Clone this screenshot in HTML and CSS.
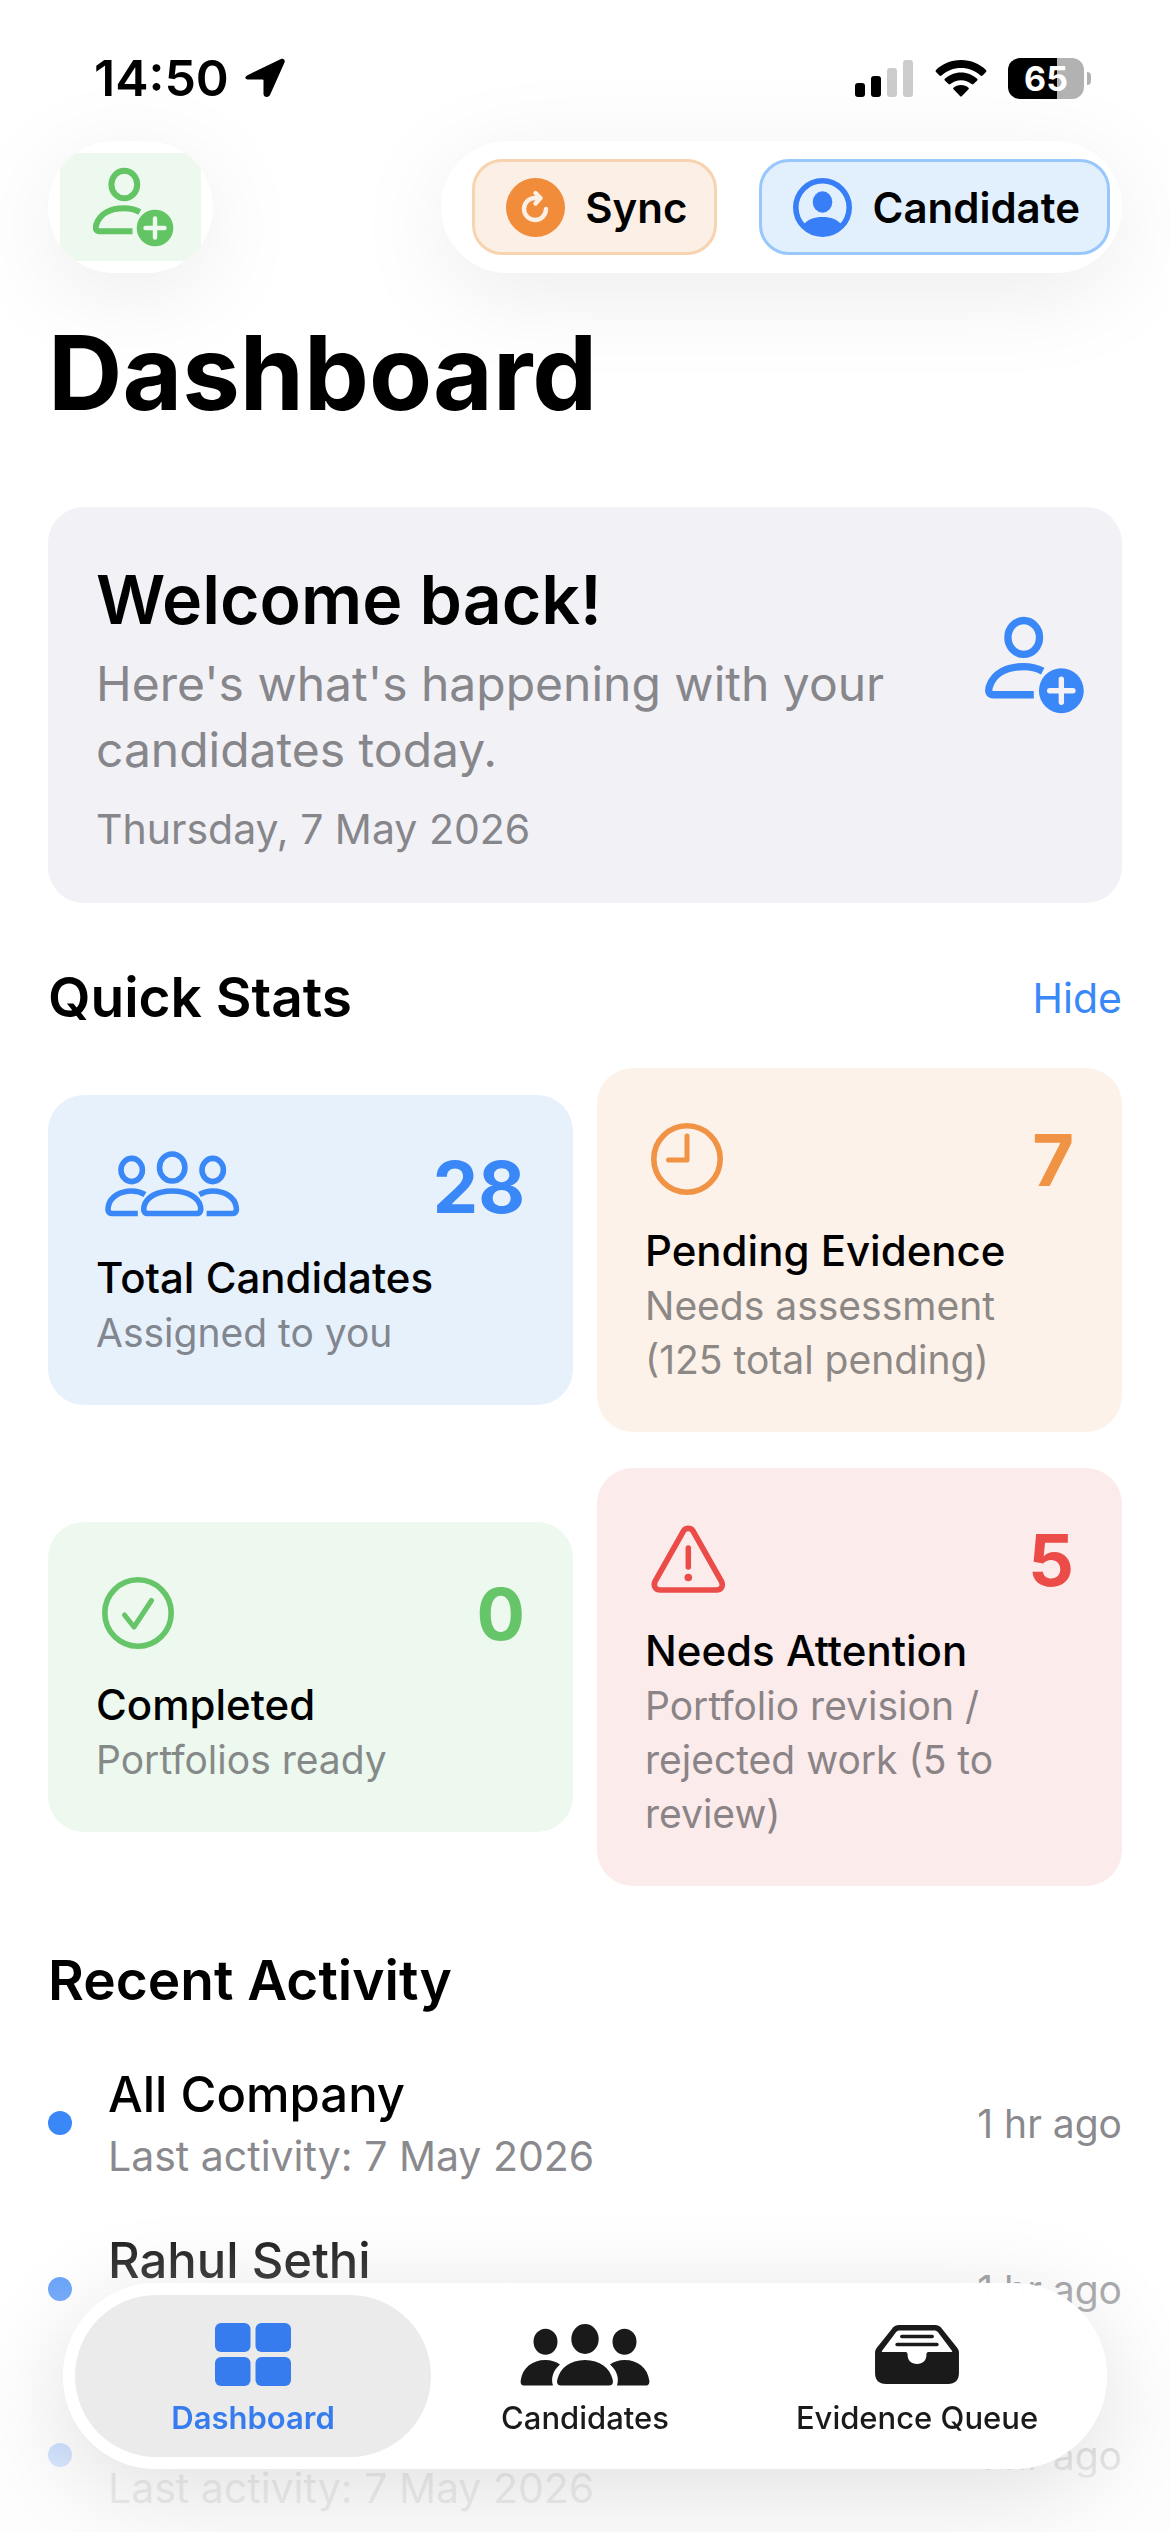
FILE: index.html
```html
<!DOCTYPE html>
<html lang="en">
<head>
    <meta charset="UTF-8">
    <meta name="viewport" content="width=device-width, initial-scale=1.0">
    <title>Dashboard</title>
    <link rel="stylesheet" href="styles.css">
</head>
<body>
    <!-- shared icons -->
    <svg class="sprite" aria-hidden="true">
        <symbol id="person-plus" viewBox="3 5 81 80">
            <g fill="none" stroke="currentColor" stroke-width="6">
                <ellipse cx="34.3" cy="22.5" rx="12.9" ry="13.8"/>
                <path d="M42.5 69.3H10C5.5 69.3 5 66 6.5 62C10 52 20 46.3 34.3 46.3C41 46.3 45 47.5 49.8 50"/>
            </g>
            <circle cx="65" cy="66" r="18.3" fill="currentColor"/>
            <path class="icon-cut" d="M65 56.5V75.5M55.5 66H74.5" stroke-width="4.4" stroke-linecap="round"/>
        </symbol>
    </svg>

    <div class="screen">
        <header class="status-bar">
            <div class="status-left">
                <span class="clock">14:50</span>
                <svg width="40" height="40" viewBox="0 0 40 40"><path d="M3 17L36 1C38.5 0 40.5 2 39.5 4.5L25 37C23.5 40 18.5 39.5 18.5 36V22.5Q18.5 21.5 17.5 21.5H4C-.5 21.5 -.8 18.8 3 17Z"/></svg>
            </div>
            <div class="status-right">
                <svg width="59" height="38" viewBox="0 0 59 38">
                    <rect x="0" y="24" width="10" height="14" rx="3"/>
                    <rect x="16" y="17" width="10" height="21" rx="3"/>
                    <rect x="32" y="9" width="10" height="29" rx="3" fill="#ccc"/>
                    <rect x="48" y="1" width="10" height="37" rx="3" fill="#ccc"/>
                </svg>
                <svg width="52" height="38" viewBox="0 0 52 38">
                    <path d="M26 1C36 1 45 5 51 11Q52 12 51 13L47.5 16.5Q46.5 17.3 45.5 16.5C40 11.5 33.5 9 26 9S12 11.5 6.5 16.5Q5.5 17.3 4.5 16.5L1 13Q0 12 1 11C7 5 16 1 26 1Z"/>
                    <path d="M26 13.5C32.5 13.5 38 16 42.2 19.8Q43 20.7 42.2 21.5L38.5 25Q37.5 25.8 36.6 25C33.5 22.5 30 21.2 26 21.2S18.5 22.5 15.4 25Q14.5 25.8 13.5 25L9.8 21.5Q9 20.7 9.8 19.8C14 16 19.5 13.5 26 13.5Z"/>
                    <path d="M26 26C29 26 31.5 27 33.5 28.7Q34.3 29.5 33.5 30.3L27 37Q26 38 25 37L18.5 30.3Q17.7 29.5 18.5 28.7C20.5 27 23 26 26 26Z"/>
                </svg>
                <div class="battery"><span class="battery-level">65</span></div>
            </div>
        </header>

        <nav class="toolbar">
            <div class="pill pill-add">
                <button class="add-button" type="button" aria-label="Add candidate">
                    <svg width="81" height="80"><use href="#person-plus"/></svg>
                </button>
            </div>
            <div class="pill pill-actions">
                <button class="action sync" type="button">
                    <svg width="59" height="59" viewBox="0 0 59 59">
                        <circle cx="29.5" cy="29.5" r="29.5" fill="#f08c3a"/>
                        <path d="M40 31A11 11 0 1 1 29.5 20H34M29.5 15L34.5 20L29.5 25.5" fill="none" stroke="#fcf0e6" stroke-width="4.4" stroke-linecap="round" stroke-linejoin="round"/>
                    </svg>
                    Sync
                </button>
                <button class="action candidate" type="button">
                    <svg width="59" height="59" viewBox="0 0 59 59">
                        <circle cx="29.5" cy="29.5" r="26.7" fill="none" stroke="#387ff7" stroke-width="5.6"/>
                        <ellipse cx="29.5" cy="24" rx="9.8" ry="10.7" fill="#387ff7"/>
                        <path d="M11 46C15 41.5 21 39 29.5 39S44 41.5 48 46C43 53 37 56.5 29.5 56.5S16 53 11 46Z" fill="#387ff7"/>
                    </svg>
                    Candidate
                </button>
            </div>
        </nav>

        <main>
            <h1>Dashboard</h1>

            <section class="welcome">
                <div>
                    <h2>Welcome back!</h2>
                    <p class="welcome-text">Here's what's happening with your candidates today.</p>
                    <p class="welcome-date">Thursday, 7 May 2026</p>
                </div>
                <svg class="welcome-icon" width="100" height="98"><use href="#person-plus"/></svg>
            </section>

            <section>
                <div class="section-head">
                    <h3>Quick Stats</h3>
                    <button class="hide-button" type="button">Hide</button>
                </div>
                <div class="stats">
                    <article class="stat blue">
                        <div class="stat-top">
                            <svg width="152" height="80" viewBox="0 0 152 80" fill="none" stroke="currentColor" stroke-width="5.6">
                                <ellipse cx="76.2" cy="21.5" rx="12.7" ry="13.5"/>
                                <ellipse cx="35.7" cy="24" rx="10.7" ry="11.6"/>
                                <ellipse cx="116.7" cy="24" rx="10.7" ry="11.6"/>
                                <path d="M52 67.5C47.8 67.5 47.3 64 48 60.5C50 51 61 45 76.2 45C91.5 45 102.5 51 104.5 60.5C105.2 64 104.7 67.5 100.5 67.5Z"/>
                                <path d="M41.8 67.5H16C12 67.5 11.6 64 12.3 60.5C14 51 24 45 35.7 45C40.5 45 45 46.2 49 48.5"/>
                                <path d="M110.6 67.5H136.4C140.4 67.5 140.8 64 140.1 60.5C138.4 51 128.4 45 116.7 45C111.9 45 107.4 46.2 103.4 48.5"/>
                            </svg>
                            <strong>28</strong>
                        </div>
                        <h4>Total Candidates</h4>
                        <p>Assigned to you</p>
                    </article>
                    <article class="stat orange">
                        <div class="stat-top">
                            <svg width="84" height="80" viewBox="0 0 84 80" fill="none" stroke="currentColor" stroke-width="5.6" stroke-linecap="round" stroke-linejoin="round">
                                <circle cx="42" cy="40" r="33.2"/>
                                <path d="M42 17V41H23.5" stroke-width="5"/>
                            </svg>
                            <strong>7</strong>
                        </div>
                        <h4>Pending Evidence</h4>
                        <p>Needs assessment (125 total pending)</p>
                    </article>
                    <article class="stat green">
                        <div class="stat-top">
                            <svg width="84" height="80" viewBox="0 0 84 80" fill="none" stroke="currentColor" stroke-width="5.6" stroke-linecap="round" stroke-linejoin="round">
                                <circle cx="42" cy="40" r="33.2"/>
                                <path d="M28.5 42L38 54L55.5 27.5" stroke-width="5"/>
                            </svg>
                            <strong>0</strong>
                        </div>
                        <h4>Completed</h4>
                        <p>Portfolios ready</p>
                    </article>
                    <article class="stat red">
                        <div class="stat-top">
                            <svg width="86" height="80" viewBox="0 0 86 80" fill="none" stroke="currentColor" stroke-width="5.6" stroke-linecap="round" stroke-linejoin="round">
                                <path d="M38.5 12C40.5 8.5 46 8.5 48 12L76.5 62.5C78.5 67 76.5 71 71.5 71H15.5C10.5 71 8 67 10 62.5Z"/>
                                <path d="M43.3 29V48" stroke-width="5.5"/>
                                <circle cx="43.3" cy="58.5" r="3.8" fill="currentColor" stroke="none"/>
                            </svg>
                            <strong>5</strong>
                        </div>
                        <h4>Needs Attention</h4>
                        <p>Portfolio revision / rejected work (5 to review)</p>
                    </article>
                </div>
            </section>

            <section>
                <div class="section-head">
                    <h3>Recent Activity</h3>
                </div>
                <ul class="activity">
                    <li>
                        <span class="dot"></span>
                        <div class="activity-text">
                            <p class="name">All Company</p>
                            <p class="last">Last activity: 7 May 2026</p>
                        </div>
                        <time>1 hr ago</time>
                    </li>
                    <li>
                        <span class="dot"></span>
                        <div class="activity-text">
                            <p class="name">Rahul Sethi</p>
                            <p class="last">Last activity: 7 May 2026</p>
                        </div>
                        <time>1 hr ago</time>
                    </li>
                    <li>
                        <span class="dot"></span>
                        <div class="activity-text">
                            <p class="name">&nbsp;</p>
                            <p class="last">Last activity: 7 May 2026</p>
                        </div>
                        <time>1 hr ago</time>
                    </li>
                </ul>
            </section>
        </main>

        <div class="bottom-fade"></div>
        <nav class="tab-bar">
            <a class="tab active" href="#dashboard">
                <svg width="78" height="66" viewBox="0 0 78 66">
                    <rect x="1" y="2" width="35.5" height="29" rx="6"/>
                    <rect x="41.5" y="2" width="35.5" height="29" rx="6"/>
                    <rect x="1" y="36" width="35.5" height="29" rx="6"/>
                    <rect x="41.5" y="36" width="35.5" height="29" rx="6"/>
                </svg>
                Dashboard
            </a>
            <a class="tab" href="#candidates">
                <svg width="130" height="66" viewBox="0 0 130 66">
                    <ellipse cx="65" cy="18" rx="13.7" ry="15"/>
                    <ellipse cx="25.5" cy="20.8" rx="12" ry="13"/>
                    <ellipse cx="104.5" cy="20.8" rx="12" ry="13"/>
                    <path d="M41 64.5C37 64.5 36.5 61 37.5 58C40 47.5 50 39 65 39S90 47.5 92.5 58C93.5 61 93 64.5 89 64.5Z"/>
                    <path d="M4 64.5C1 64.5 .3 62 .8 59C2.5 47 12 39 25.5 39C31 39 36 40.5 40 43.5C33.5 49 30.5 57 33 64.5Z"/>
                    <path d="M126 64.5C129 64.5 129.7 62 129.2 59C127.5 47 118 39 104.5 39C99 39 94 40.5 90 43.5C96.5 49 99.5 57 97 64.5Z"/>
                </svg>
                Candidates
            </a>
            <a class="tab" href="#evidence">
                <svg width="86" height="66" viewBox="0 0 82 66" preserveAspectRatio="none">
                    <path fill-rule="evenodd" d="M24 4H58C61 4 63.5 5.5 65 8L79.5 27C80.5 28.5 81 30 81 32V52C81 59 77.5 63 70.5 63H11.5C4.5 63 1 59 1 52V32C1 30 1.5 28.5 2.5 27L17 8C18.5 5.5 21 4 24 4ZM25 9.5C23 9.5 21.8 10 20.8 11.5L7.5 30Q7 31 8 31H30C31.5 31 32 32 32 33.5C32 39.5 35.5 43 41 43S50 39.5 50 33.5C50 32 50.5 31 52 31H74Q75 31 74.5 30L61.2 11.5C60.2 10 59 9.5 57 9.5Z"/>
                    <path d="M26.5 15.5H55.5M22 23.5H60" stroke="currentColor" stroke-width="3.4" stroke-linecap="round"/>
                </svg>
                Evidence Queue
            </a>
        </nav>
    </div>
</body>
</html>
```
FILE: styles.css
```css
* {
    box-sizing: border-box;
    margin: 0;
    padding: 0;
}
body {
    font-family: Inter, "Liberation Sans", sans-serif;
    background-color: #fff;
    color: #000;
}
button {
    font-family: inherit;
    border: none;
    background: none;
    cursor: pointer;
}
svg {
    display: block;
    flex: none;
}
.sprite {
    display: none;
}
.icon-cut {
    stroke: var(--cut);
}
.screen {
    height: 100vh;
    overflow: hidden;
    padding: 0 48px;
}

/* status bar */
.status-bar {
    display: flex;
    justify-content: space-between;
    align-items: center;
    height: 141px;
    padding: 15px 30px 0 46px;
}
.status-left,
.status-right {
    display: flex;
    align-items: center;
}
.status-left {
    gap: 16px;
}
.status-right {
    gap: 21px;
}
.clock {
    font-size: 50px;
    font-weight: 600;
}
.battery {
    position: relative;
    width: 76px;
    height: 41px;
    margin-right: 8px;
    border-radius: 12px;
    background: linear-gradient(to right, #000 65%, #b2b2b2 65%);
    text-align: center;
}
.battery::after {
    content: "";
    position: absolute;
    right: -7px;
    top: 14px;
    width: 4px;
    height: 13px;
    border-radius: 0 4px 4px 0;
    background-color: #b2b2b2;
}
.battery-level {
    color: #fff;
    font-size: 34px;
    line-height: 41px;
    font-weight: 700;
}

/* toolbar */
.toolbar {
    display: flex;
    justify-content: space-between;
}
.pill {
    display: flex;
    align-items: center;
    height: 132px;
    border-radius: 66px;
    background-color: #fff;
    box-shadow: 0 20px 100px rgba(0, 0, 0, 0.08);
    overflow: hidden;
}
.pill-add {
    padding: 12px;
}
.add-button {
    --cut: #edf8ef;
    display: flex;
    align-items: center;
    justify-content: center;
    width: 141px;
    height: 108px;
    padding-left: 6px;
    background-color: #edf8ef;
    color: #62c462;
}
.pill-actions {
    gap: 42px;
    padding: 0 12px 0 31px;
}
.action {
    display: flex;
    align-items: center;
    gap: 20px;
    height: 96px;
    padding: 0 27px 0 31px;
    border-radius: 30px;
    font-size: 42px;
    font-weight: 600;
    color: #000;
}
.sync {
    border: 3px solid #f8d3af;
    background-color: #fcf0e6;
}
.candidate {
    border: 3px solid #98c7fb;
    background-color: #e2f0fe;
}

/* headings */
h1 {
    margin: 38px 0 72px;
    font-size: 103px;
    line-height: 124px;
    font-weight: 700;
}
.section-head {
    display: flex;
    justify-content: space-between;
    align-items: center;
    margin: 60px 0 36px;
}
h3 {
    font-size: 55px;
    line-height: 69px;
    font-weight: 600;
}
.hide-button {
    font-size: 41px;
    color: #3a87f8;
}

/* welcome card */
.welcome {
    --cut: #f1f1f6;
    display: flex;
    justify-content: space-between;
    align-items: center;
    padding: 48px 37px 48px 48px;
    border-radius: 36px;
    background-color: #f1f1f6;
}
.welcome h2 {
    font-size: 68px;
    line-height: 88px;
    font-weight: 600;
}
.welcome-text {
    margin-top: 8px;
    font-size: 48px;
    line-height: 66px;
    color: #86868b;
}
.welcome-date {
    margin-top: 20px;
    font-size: 41px;
    line-height: 52px;
    color: #86868b;
}
.welcome-icon {
    margin-bottom: 80px;
    color: #3a87f8;
}

/* stat cards */
.stats {
    display: grid;
    grid-template-columns: 1fr 1fr;
    align-items: center;
    gap: 36px 24px;
}
.stat {
    padding: 48px 48px 45px;
    border-radius: 36px;
}
.stat-top {
    display: flex;
    justify-content: space-between;
    align-items: center;
    height: 86px;
}
.stat strong {
    font-size: 72px;
    font-weight: 700;
}
.stat h4 {
    margin-top: 24px;
    font-size: 42px;
    line-height: 50px;
    font-weight: 500;
}
.stat p {
    margin-top: 3px;
    font-size: 39px;
    line-height: 54px;
}
.blue {
    background-color: #e7f1fc;
}
.blue .stat-top {
    color: #3a87f8;
}
.blue p {
    color: #82868e;
}
.orange {
    background-color: #fdf2e9;
}
.orange .stat-top {
    color: #f09344;
}
.orange p {
    color: #8c8886;
}
.green {
    background-color: #edf8ef;
}
.green .stat-top {
    color: #66c568;
}
.green p {
    color: #858a88;
}
.red {
    background-color: #fbebeb;
}
.red .stat-top {
    color: #eb4c48;
}
.red p {
    color: #8b8487;
}

/* recent activity */
.activity {
    display: flex;
    flex-direction: column;
    gap: 50px;
    padding-top: 14px;
    list-style: none;
}
.activity li {
    display: flex;
    align-items: center;
}
.dot {
    width: 24px;
    height: 24px;
    margin-right: 36px;
    border-radius: 50%;
    background-color: #3a87f8;
}
.activity-text {
    flex: 1;
}
.name {
    font-size: 49px;
    line-height: 60px;
    font-weight: 500;
}
.last {
    margin-top: 6px;
    font-size: 41px;
    line-height: 50px;
    color: #8a8a8e;
}
.activity time {
    font-size: 39px;
    color: #8a8a8e;
}

/* bottom tab bar */
.bottom-fade {
    position: fixed;
    left: 0;
    right: 0;
    bottom: 0;
    height: 340px;
    background: linear-gradient(to bottom, rgba(255, 255, 255, 0), rgba(255, 255, 255, 0.3) 30%, rgba(253, 253, 253, 0.86) 85%);
}
.tab-bar {
    position: fixed;
    left: 63px;
    right: 63px;
    bottom: 63px;
    display: flex;
    height: 186px;
    padding: 12px;
    border-radius: 93px;
    background-color: rgba(255, 255, 255, 0.96);
    backdrop-filter: blur(16px);
    box-shadow: 0 20px 100px rgba(0, 0, 0, 0.12);
}
.tab {
    flex: 1;
    display: flex;
    flex-direction: column;
    align-items: center;
    gap: 13px;
    padding-top: 26px;
    border-radius: 81px;
    font-size: 31px;
    line-height: 36px;
    font-weight: 500;
    color: #1a1a1a;
    fill: currentColor;
    text-decoration: none;
}
.tab + .tab {
    margin-left: -24px;
}
.active {
    background-color: #ebebeb;
    color: #367cee;
    font-weight: 600;
}
```
